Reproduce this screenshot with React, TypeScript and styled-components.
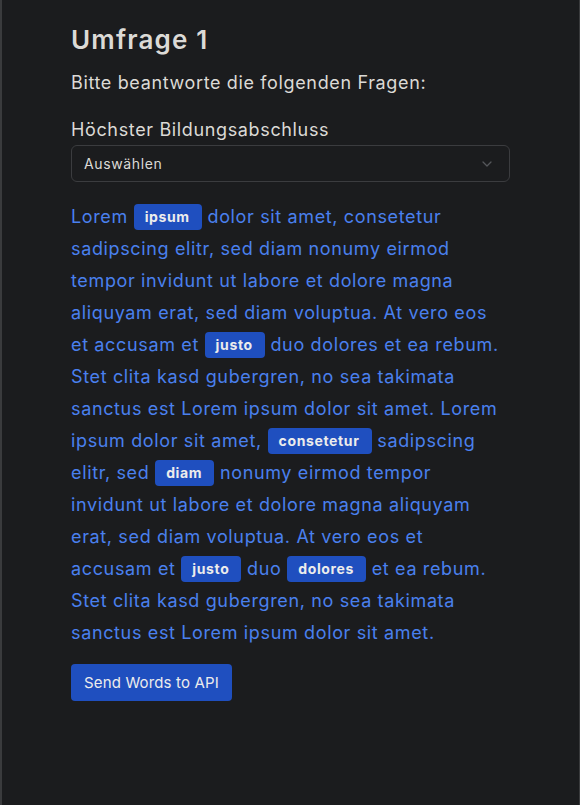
import React from "react";
import styled, { createGlobalStyle } from "styled-components";

const Global = createGlobalStyle`
  html, body { margin: 0; padding: 0; background: #1b1c1e; }
  body { font-family: Inter, "Noto Sans", sans-serif; letter-spacing: 0.04em; }
`;

const Frame = styled.div`
  min-height: 805px;
  box-sizing: border-box;
  border-left: 2px solid #3a3b3d;
  border-right: 1px solid #3a3b3d;
  background: #1b1c1e;
  padding: 22px 0 40px 69px;
`;

const Content = styled.div`
  width: 439px;
  display: flex;
  flex-direction: column;
`;

const Title = styled.h1`
  margin: 0;
  font-size: 26px;
  line-height: 36px;
  font-weight: 600;
  letter-spacing: 0.045em;
  color: #dcdad6;
`;

const Subtitle = styled.p`
  margin: 12px 0 0;
  font-size: 18px;
  line-height: 26px;
  font-weight: 400;
  color: #dcdad6;
`;

const Label = styled.label`
  margin-top: 21px;
  font-size: 18px;
  line-height: 26px;
  color: #dcdad6;
`;

const SelectBox = styled.div`
  margin-top: 2px;
  height: 37px;
  box-sizing: border-box;
  border: 1px solid #3b3c3f;
  border-radius: 6px;
  display: flex;
  align-items: center;
  justify-content: space-between;
  padding: 0 16px 0 12px;
  font-size: 14px;
  color: #dcdad6;
`;

const Text = styled.p`
  margin: 19px 0 0;
  padding-right: 8px;
  font-size: 18px;
  line-height: 32px;
  color: #4a80ee;
`;

const Chip = styled.span`
  display: inline-block;
  background: #1f4fbf;
  color: #ececec;
  font-size: 14px;
  font-weight: 700;
  line-height: 26px;
  padding: 0 12px 0 11px;
  border-radius: 4px;
  vertical-align: 1px;
`;

const Button = styled.button`
  margin-top: 15px;
  align-self: flex-start;
  height: 37px;
  padding: 0 13px;
  border: none;
  border-radius: 4px;
  background: #1f4fbf;
  color: #ececec;
  font-family: Inter, "Noto Sans", sans-serif;
  letter-spacing: 0.01em;
  font-size: 15px;
  cursor: pointer;
`;

const Chevron = () => (
  <svg width="12" height="12" viewBox="0 0 12 12" fill="none">
    <path d="M2 4l4 4 4-4" stroke="#55575b" strokeWidth="1.3" strokeLinecap="round" strokeLinejoin="round" />
  </svg>
);

export default function App() {
  return (
    <>
      <Global />
      <Frame>
        <Content>
          <Title>Umfrage 1</Title>
          <Subtitle>Bitte beantworte die folgenden Fragen:</Subtitle>
          <Label>Höchster Bildungsabschluss</Label>
          <SelectBox>
            <span>Auswählen</span>
            <Chevron />
          </SelectBox>
          <Text>
            Lorem <Chip>ipsum</Chip> dolor sit amet, consetetur sadipscing elitr, sed diam nonumy eirmod
            tempor invidunt ut labore et dolore magna aliquyam erat, sed diam voluptua. At vero eos et
            accusam et <Chip>justo</Chip> duo dolores et ea rebum. Stet clita kasd gubergren, no sea
            takimata sanctus est Lorem ipsum dolor sit amet. Lorem ipsum dolor sit amet,{" "}
            <Chip>consetetur</Chip> sadipscing elitr, sed <Chip>diam</Chip> nonumy eirmod tempor invidunt
            ut labore et dolore magna aliquyam erat, sed diam voluptua. At vero eos et accusam et{" "}
            <Chip>justo</Chip> duo <Chip>dolores</Chip> et ea rebum. Stet clita kasd gubergren, no sea
            takimata sanctus est Lorem ipsum dolor sit amet.
          </Text>
          <Button>Send Words to API</Button>
        </Content>
      </Frame>
    </>
  );
}
